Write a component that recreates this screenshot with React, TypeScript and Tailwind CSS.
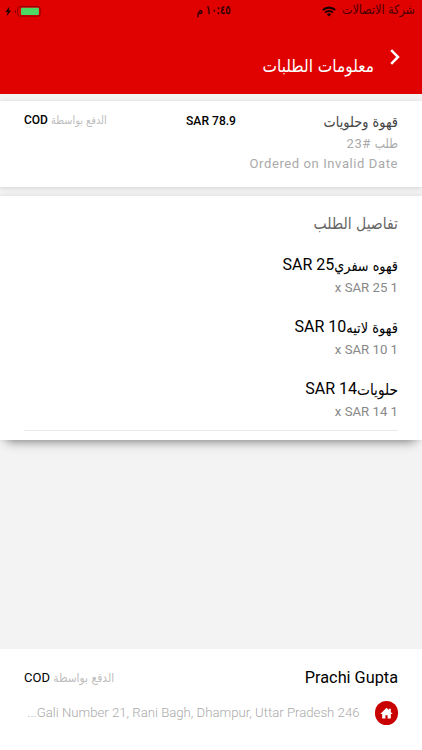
import { ReactNode } from "react";

type IOrderItem = {
  name: string;
  price: number;
  quantity: number;
  nameClass: string;
};

const orderItems: IOrderItem[] = [
  { name: "قهوه سفري", price: 25, quantity: 1, nameClass: "text-[12.8px]" },
  { name: "قهوة لاتيه", price: 10, quantity: 1, nameClass: "text-[13px]" },
  { name: "حلويات", price: 14, quantity: 1, nameClass: "text-[13.7px]" },
];

const Arabic = ({
  children,
  className,
}: {
  children: ReactNode;
  className: string;
}) => (
  <span
    className={`inline-block scale-y-[1.15] font-['DejaVu_Sans',sans-serif] ${className}`}
  >
    {children}
  </span>
);

const WifiIcon = () => (
  <svg width="14" height="11" viewBox="0 0 14 11" fill="none">
    <path d="M0.8 4.1a9 9 0 0 1 12.4 0" stroke="#1c0000" strokeWidth="2.1" />
    <path d="M3 6.6a5.8 5.8 0 0 1 8 0" stroke="#1c0000" strokeWidth="1.8" />
    <path d="M7 10.6L4.9 8.4a3 3 0 0 1 4.2 0z" fill="#1c0000" />
  </svg>
);

const BatteryIcon = () => (
  <svg width="36" height="11" viewBox="0 0 36 11">
    <path d="M4.6 0.5L0.4 6h2.3L1.6 10.3L6.2 4.6H3.8z" fill="#1c0000" />
    <path d="M10.9 3.8v3.4a1.8 1.8 0 0 1 0-3.4z" fill="#7a0000" />
    <rect
      x="12.7"
      y="0.7"
      width="22.4"
      height="9.4"
      rx="2"
      fill="none"
      stroke="#8c0000"
    />
    <rect x="16" y="1.8" width="17.9" height="7.2" rx="0.8" fill="#4cd964" />
  </svg>
);

const StatusBar = () => (
  <div className="grid h-[22px] grid-cols-[1fr_auto_1fr] items-center pl-[5px] text-[#1c0000]">
    <div className="flex items-center gap-[6px] pr-[7px]">
      <Arabic className="text-[11.2px] leading-[22px] text-[#4a0000]">
        شركة الاتصالات
      </Arabic>
      <WifiIcon />
    </div>
    <Arabic className="text-[10px] leading-[22px] [-webkit-text-stroke:0.3px_#1c0000]">
      ١٠:٤٥ م
    </Arabic>
    <div className="flex justify-end">
      <BatteryIcon />
    </div>
  </div>
);

const Header = () => (
  <header className="h-[94px] shrink-0 bg-[#df0200]">
    <StatusBar />
    <div className="flex items-start pr-[21px] pt-[26px]">
      <svg width="12" height="18" viewBox="0 0 12 18" fill="none">
        <path d="M2.2 2.2l6.8 6.8l-6.8 6.8" stroke="white" strokeWidth="2.5" />
      </svg>
      <Arabic className="mr-[15px] mt-[6px] text-[15.4px] leading-6 text-white">
        معلومات الطلبات
      </Arabic>
    </div>
  </header>
);

const OrderSummary = () => (
  <section className="mt-[7px] h-[86px] bg-white px-6 pt-[8px] shadow-[0_1px_5px_rgba(0,0,0,0.14)]">
    <div className="flex h-[25px] items-center">
      <Arabic className="w-[162px] text-[12.9px] leading-6 text-[#444]">
        قهوة وحلويات
      </Arabic>
      <span className="text-[12.1px] font-medium" dir="ltr">
        SAR 78.9
      </span>
      <p className="-mt-[2px] mr-auto text-[12px] font-medium leading-5">
        <Arabic className="text-[9.8px] font-normal text-[#bdbdbd]">
          الدفع بواسطة
        </Arabic>{" "}
        COD
      </p>
    </div>
    <p className="h-5 text-[13px] leading-5 tracking-[0.6px] text-[#aaa]">
      <Arabic className="text-[11px] tracking-normal">طلب</Arabic> #
      <bdi>23</bdi>
    </p>
    <p className="text-[13px] leading-5 tracking-[0.6px] text-[#aaa]">
      Ordered on Invalid Date
    </p>
  </section>
);

const OrderDetails = () => (
  <section className="mt-[9px] h-[244px] bg-white px-6 pt-[15px] shadow-[0_9px_10px_-7px_rgba(0,0,0,0.42),0_0_6px_rgba(0,0,0,0.1)]">
    <h2 className="h-[42px] leading-6">
      <Arabic className="text-[14px] text-[#666]">تفاصيل الطلب</Arabic>
    </h2>
    {orderItems.map((item) => (
      <div key={item.name} className="h-[62px]">
        <p className="h-[23px] text-[16px] leading-[23px]">
          <Arabic className={item.nameClass}>{item.name}</Arabic>
          SAR {item.price}
        </p>
        <p
          dir="ltr"
          className="text-right text-[13.2px] leading-[24px] text-[#888]"
        >
          x SAR {item.price} {item.quantity}
        </p>
      </div>
    ))}
    <hr className="-mt-[9px] border-[#e8e8e8]" />
  </section>
);

const Customer = () => (
  <footer className="mt-auto h-[101px] bg-white px-6 pt-[17px]">
    <div className="flex h-6 items-center justify-between">
      <span className="text-[16.3px]">Prachi Gupta</span>
      <p className="text-[13px] leading-6">
        <Arabic className="text-[10.7px] text-[#bdbdbd]">الدفع بواسطة</Arabic>{" "}
        COD
      </p>
    </div>
    <div className="mt-[11px] flex h-6 items-center gap-[15px]">
      <div className="flex h-[23.5px] w-[23.5px] items-center justify-center rounded-full bg-[#c90000]">
        <svg width="13" height="13" viewBox="0 0 24 24" fill="white">
          <path d="M10 21v-6h4v6h6v-8h3.5L12 1.5L0.5 13H4v8z" />
          <path d="M16 3h4v7l-4-4z" />
        </svg>
      </div>
      <span className="whitespace-nowrap text-[13.18px] font-light text-[#aaa]">
        246 Gali Number 21, Rani Bagh, Dhampur, Uttar Pradesh...
      </span>
    </div>
  </footer>
);

const App = () => (
  <div
    dir="rtl"
    className="flex h-[750px] w-[422px] flex-col overflow-hidden bg-[#f3f3f3] font-['Roboto','DejaVu_Sans',sans-serif] text-black"
  >
    <Header />
    <OrderSummary />
    <OrderDetails />
    <Customer />
  </div>
);

export default App;
